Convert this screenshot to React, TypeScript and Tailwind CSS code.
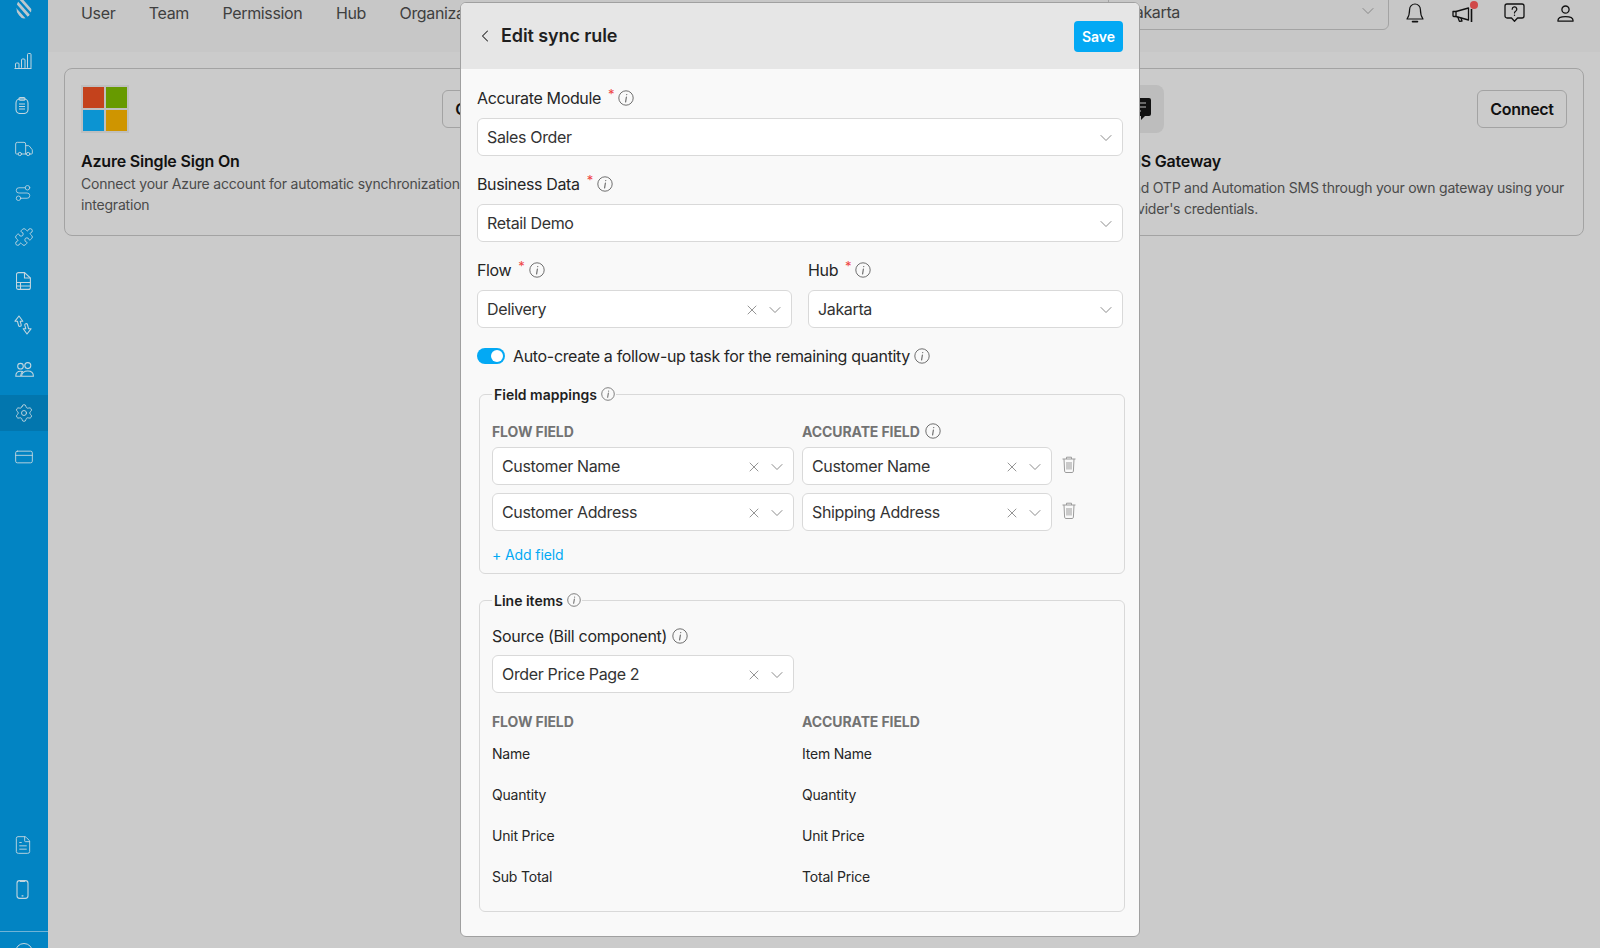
import { ChevronDown, ChevronLeft, CreditCard, FileText, Puzzle, Route, Settings, Truck, X } from "lucide-react";
import type { ReactNode } from "react";

const Info = ({ size = 16 }: { size?: number }) => (
  <svg width={size} height={size} viewBox="0 0 16 16" fill="none" stroke="#6f6f6f" strokeWidth="1" className="shrink-0">
    <circle cx="8" cy="8" r="7.2" />
    <path d="M8.4 7 7.6 11.8" strokeWidth="1.2" strokeLinecap="round" />
    <circle cx="8.7" cy="4.6" r="0.7" fill="#6f6f6f" stroke="none" />
  </svg>
);

const BarsIcon = () => (
  <svg width="18" height="18" viewBox="0 0 18 18" fill="none" stroke="currentColor" strokeWidth="1" className="-ml-[3px]">
    <path d="M.5 16.5h17" />
    <rect x="1.5" y="11" width="3.5" height="5.5" rx="1" />
    <rect x="7.5" y="7" width="3.5" height="9.5" rx="1" />
    <rect x="13.5" y="1.5" width="3.5" height="15" rx="1" />
  </svg>
);

const ClipIcon = () => (
  <svg width="14" height="17" viewBox="0 0 14 17" fill="none" stroke="currentColor" strokeWidth="1.1" className="-ml-[4px]">
    <rect x="1" y="2" width="12" height="14.5" rx="4" />
    <rect x="4" y="0.6" width="6" height="2.6" rx="1.2" />
    <path d="M4 7h6M4 9.5h6M4 12h6" />
  </svg>
);

const SheetIcon = () => (
  <svg width="15" height="18" viewBox="0 0 15 18" fill="none" stroke="currentColor" strokeWidth="1.1" className="-ml-[1px]">
    <path d="M2.5.6h6L14.4 6v9.4a2 2 0 0 1-2 2H2.5a2 2 0 0 1-2-2V2.6a2 2 0 0 1 2-2Z" />
    <path d="M8.5.6V6h5.9M.5 10.5h13.9M.5 14h13.9M4.5 10.5v7" />
  </svg>
);

const ArrowsIcon = () => (
  <svg width="18" height="20" viewBox="0 0 18 20" fill="none" stroke="currentColor" strokeWidth="1.1" strokeLinejoin="round" className="-ml-[2px]">
    <path d="M5 1 1 6.2h2.4l1.2 4.4c.5 1.4 3 .8 2.6-.8L6.2 6.2h2.6Z" />
    <path d="M13 19l4-5.2h-2.4l-1.2-4.4c-.5-1.4-3-.8-2.6.8l1 3.6H9.2Z" />
  </svg>
);

const UsersIcon = () => (
  <svg width="19" height="15" viewBox="0 0 19 15" fill="none" stroke="currentColor" strokeWidth="1.1">
    <circle cx="5.5" cy="4.2" r="2.8" />
    <circle cx="12.8" cy="3.6" r="3" />
    <path d="M.8 14.2c0-3.2 2-5 4.7-5 .8 0 1.4.1 2 .4-1.2 1-1.9 2.6-1.9 4.6Z" />
    <path d="M6.6 14.2c0-3.4 2.6-5.2 6.2-5.2s5.6 1.8 5.6 5.2Z" />
  </svg>
);

const PhoneIcon = () => (
  <svg width="13" height="19" viewBox="0 0 13 19" fill="none" stroke="currentColor" strokeWidth="1.1" className="-ml-[3px]">
    <rect x="1" y="0.6" width="11" height="17.8" rx="2.6" />
    <path d="M3.8 1.4h5.4M5.6 15.8h1.8" strokeWidth="1.3" />
  </svg>
);

const BellIcon = () => (
  <svg width="18" height="21" viewBox="0 0 18 21" fill="none" stroke="#111" strokeWidth="1.2" strokeLinejoin="round">
    <path d="M9 1a5.4 5.4 0 0 0-5.4 5.4c0 5-.8 7-2.6 9.6h16c-1.8-2.6-2.6-4.6-2.6-9.6A5.4 5.4 0 0 0 9 1Z" />
    <path d="M6.6 18.6h4.8" strokeWidth="1.8" strokeLinecap="round" />
  </svg>
);

const MegaphoneIcon = () => (
  <svg width="22" height="16" viewBox="0 0 22 16" fill="none" stroke="#111" strokeWidth="1.3" strokeLinejoin="round">
    <path d="M1 4.5h3v5H1.8A.8.8 0 0 1 1 8.7Z" />
    <path d="M4 4.5 16.5 1v12L4 9.5" />
    <path d="M5.8 10l1.6 4.4 2.6-.4-1-3" />
    <path d="M19.5 2v13" strokeWidth="1.6" />
  </svg>
);

const QuestionBubble = () => (
  <svg width="21" height="20" viewBox="0 0 21 20" fill="none" stroke="#111" strokeWidth="1.3" strokeLinejoin="round">
    <path d="M3 1h15a2 2 0 0 1 2 2v10a2 2 0 0 1-2 2h-4.5l-3 3.2-3-3.2H3a2 2 0 0 1-2-2V3a2 2 0 0 1 2-2Z" />
    <path d="M8.2 6.2a2.3 2.3 0 1 1 3.4 2c-.8.5-1.1.9-1.1 1.7" strokeLinecap="round" />
    <circle cx="10.5" cy="12.2" r="0.7" fill="#111" stroke="none" />
  </svg>
);

const PersonIcon = () => (
  <svg width="17" height="17" viewBox="0 0 17 17" fill="none" stroke="#111" strokeWidth="1.3" strokeLinejoin="round">
    <circle cx="8.5" cy="4.6" r="3.6" />
    <path d="M1 16.2v-1c0-2.2 3.2-3.6 7.5-3.6s7.5 1.4 7.5 3.6v1Z" />
  </svg>
);

const Trash = () => (
  <svg width="14" height="17" viewBox="0 0 14 17" fill="none" stroke="#9b9b9b" strokeWidth="1">
    <path d="M.5 3h13M4.5 3V1.2h5V3M2 3l.6 12.2c0 .7.5 1.3 1.2 1.3h6.4c.7 0 1.2-.6 1.2-1.3L12 3M5 6v7.5M7 6v7.5M9 6v7.5" />
  </svg>
);

const LogoMark = () => (
  <svg width="16" height="19" viewBox="0 0 16 19">
    <clipPath id="logo-clip">
      <ellipse cx="8" cy="8" rx="7.6" ry="10.4" />
    </clipPath>
    <g clipPath="url(#logo-clip)" stroke="#bcc8ce" strokeWidth="2.8">
      <path d="M-6 3 10 21M-3 -2 13 16M2 -4 18 14" />
    </g>
  </svg>
);

const Select = ({ value, clear, className = "" }: { value: string; clear?: boolean; className?: string }) => (
  <div className={`h-[38px] flex items-center pl-[9px] pr-[6px] bg-white border border-[#d9d9d9] rounded-[6px] text-[16px] tracking-[-0.35px] text-[#333333] ${className}`}>
    <span className="flex-1 truncate">{value}</span>
    {clear && <X size={16} strokeWidth={1.25} className="text-[#808080] mr-[5px] mt-[2px]" />}
    <ChevronDown size={20} strokeWidth={1.1} className="text-[#808080] mt-[2px]" />
  </div>
);

const Label = ({ text, required }: { text: string; required?: boolean }) => (
  <div className="h-[24px] mb-[8px] flex items-center text-[16px] tracking-[-0.35px] text-[#262626]">
    {text}
    {required && <span className="ml-[7px] mr-[4px] -mt-[8px] text-[13px] leading-none text-[#ef4444]">*</span>}
    <Info />
  </div>
);

const ColHead = ({ children }: { children: ReactNode }) => (
  <div className="h-[20px] flex items-center gap-[5px] text-[14px] font-bold tracking-[-0.1px] text-[#737373]">{children}</div>
);

const Legend = ({ text }: { text: string }) => (
  <legend className="h-[20px] pl-[2px] pr-[1px] flex items-center gap-[4px] text-[14px] font-semibold text-[#1f1f1f]">
    {text}
    <Info size={14} />
  </legend>
);

const navItems = ["User", "Team", "Permission", "Hub", "Organization"];

const sideIcons = [
  <BarsIcon />,
  <ClipIcon />,
  <Truck size={20} strokeWidth={1.1} className="-ml-[1px]" />,
  <Route size={18} strokeWidth={1.1} className="-ml-[3px]" />,
  <Puzzle size={20} strokeWidth={1.1} className="-ml-[1px]" />,
  <SheetIcon />,
  <ArrowsIcon />,
  <UsersIcon />,
  <Settings size={20} strokeWidth={1.1} />,
  <CreditCard size={20} strokeWidth={1.1} />,
];

const mappings = [
  ["Customer Name", "Customer Name"],
  ["Customer Address", "Shipping Address"],
];

const lineItems = [
  ["Name", "Item Name"],
  ["Quantity", "Quantity"],
  ["Unit Price", "Unit Price"],
  ["Sub Total", "Total Price"],
];

export default function App() {
  return (
    <div className="relative flex h-[948px] overflow-hidden bg-[#cbcbcb] font-['Inter',sans-serif]">
      <aside className="w-[48px] shrink-0 flex flex-col bg-[#0284c3] text-[#c3d6df]">
        <div className="h-[43px] flex justify-center"><LogoMark /></div>
        <div className="flex flex-col gap-[8px]">
          {sideIcons.map((icon, i) => (
            <div key={i} className={`h-[36px] flex items-center justify-center ${i === 8 ? "bg-[#0276ae]" : ""}`}>
              {icon}
            </div>
          ))}
        </div>
        <div className="mt-auto flex flex-col gap-[8px]">
          <div className="h-[36px] flex items-center justify-center"><FileText size={20} strokeWidth={1.1} className="-ml-[3px]" /></div>
          <div className="h-[36px] flex items-center justify-center"><PhoneIcon /></div>
          <div className="mt-[16px] h-[17px] border-t border-[#6fb3d6] flex justify-center pt-[11px]">
            <div className="w-[18px] h-[18px] shrink-0 rounded-full border border-[#c3d6df]" />
          </div>
        </div>
      </aside>

      <main className="flex-1 min-w-0">
        <header className="h-[52px] bg-[#c7c7c7] flex items-start pl-[33px] pr-[23px]">
          <nav className="flex gap-[33.5px] h-[26px] items-center text-[16px] tracking-[-0.35px] text-[#3f3f3f] whitespace-nowrap">
            {navItems.map((n) => <span key={n}>{n}</span>)}
          </nav>
          <div className="ml-auto flex items-start">
            <div className="w-[281px] h-[38px] -mt-[8px] pl-[9px] pr-[10px] flex items-center border border-[#a3a3a3] rounded-[6px] text-[16px] tracking-[-0.35px] text-[#3f3f3f]">
              <span className="flex-1 mt-[2px] pl-[8px]">Jakarta</span>
              <ChevronDown size={20} strokeWidth={1.1} className="text-[#808080]" />
            </div>
            <div className="ml-[14px] flex items-center h-[26px]">
              <div className="w-[24px] flex justify-center"><BellIcon /></div>
              <div className="relative w-[24px] ml-[24px] flex justify-center">
                <div className="pt-[3px]"><MegaphoneIcon /></div>
                <span className="absolute -top-[3px] right-[-3px] w-[8px] h-[8px] rounded-full bg-[#d04a4a]" />
              </div>
              <div className="w-[24px] ml-[27px] flex justify-center"><QuestionBubble /></div>
              <div className="w-[24px] ml-[27px] flex justify-center"><PersonIcon /></div>
            </div>
          </div>
        </header>

        <div className="flex justify-between px-[16px] pt-[16px]">
          <section className="w-[485px] h-[168px] border border-[#a3a3a3] rounded-[8px] pt-[16px] px-[16px]">
            <div className="flex justify-between items-start">
              <div className="w-[48px] h-[48px] bg-[#bfbfbf] grid grid-cols-2 gap-[2px] p-[2px]">
                <div className="bg-[#c4421c]" />
                <div className="bg-[#679a00]" />
                <div className="bg-[#0c94d2]" />
                <div className="bg-[#cf9500]" />
              </div>
              <button className="w-[90px] h-[38px] mt-[5px] border border-[#a3a3a3] rounded-[6px] text-[16px] tracking-[-0.3px] font-semibold text-[#111]">Connect</button>
            </div>
            <h3 className="mt-[16px] text-[16px] tracking-[-0.2px] leading-[24px] font-semibold text-[#111]">Azure Single Sign On</h3>
            <p className="text-[14px] tracking-[-0.2px] leading-[21px] text-[#4a4a4a]">Connect your Azure account for automatic synchronization and user integration</p>
          </section>

          <section className="w-[485px] h-[168px] border border-[#a3a3a3] rounded-[8px] pt-[16px] px-[16px]">
            <div className="flex justify-between items-start">
              <div className="w-[48px] h-[48px] bg-[#bdbdbd] rounded-[8px] flex items-center justify-center">
                <svg width="24" height="24" viewBox="0 0 24 24">
                  <path d="M3 1h18a2 2 0 0 1 2 2v14a2 2 0 0 1-2 2h-4l-4 4v-4H3a2 2 0 0 1-2-2V3a2 2 0 0 1 2-2Z" fill="#111" />
                  <path d="M6 6h12M6 10h12M6 14h7" stroke="#bdbdbd" strokeWidth="1.2" />
                </svg>
              </div>
              <button className="w-[90px] h-[38px] mt-[5px] border border-[#a3a3a3] rounded-[6px] text-[16px] tracking-[-0.3px] font-semibold text-[#111]">Connect</button>
            </div>
            <h3 className="mt-[16px] text-[16px] tracking-[-0.2px] leading-[24px] font-semibold text-[#111]">SMS Gateway</h3>
            <p className="mt-[4px] text-[14px] tracking-[-0.23px] leading-[21px] text-[#4a4a4a]">Send OTP and Automation SMS through your own gateway using your provider's credentials.</p>
          </section>
        </div>
      </main>

      {/* dialog */}
      <div className="absolute left-[460px] top-[2px] w-[680px] h-[935px] bg-[#f9f9f9] border border-[#a0a0a0] rounded-[6px] overflow-hidden">
        <div className="h-[66px] bg-[#e6e6e6] flex items-center pl-[15px] pr-[16px]">
          <ChevronLeft size={20} strokeWidth={1.25} className="text-[#222] -ml-[1px]" />
          <h2 className="ml-[6px] -mt-[1px] text-[18px] tracking-[-0.1px] font-semibold text-[#1f1f1f]">Edit sync rule</h2>
          <button className="ml-auto w-[49px] h-[31px] rounded-[4px] bg-[#03a9f4] text-[14px] font-semibold text-white">Save</button>
        </div>

        <div className="px-[16px] pt-[17px]">
          <Label text="Accurate Module" required />
          <Select value="Sales Order" />
          <div className="mt-[16px]">
            <Label text="Business Data" required />
            <Select value="Retail Demo" />
          </div>
          <div className="mt-[16px] grid grid-cols-2 gap-[16px]">
            <div>
              <Label text="Flow" required />
              <Select value="Delivery" clear />
            </div>
            <div>
              <Label text="Hub" required />
              <Select value="Jakarta" />
            </div>
          </div>

          <div className="mt-[18px] h-[20px] flex items-center text-[16px] tracking-[-0.33px] text-[#262626]">
            <div className="w-[28px] h-[16px] rounded-full bg-[#03a9f4] flex justify-end items-center pr-[2px]">
              <div className="w-[12px] h-[12px] rounded-full bg-white" />
            </div>
            <span className="ml-[8px] mr-[4px]">Auto-create a follow-up task for the remaining quantity</span>
            <Info />
          </div>

          <fieldset className="mt-[18px] ml-[2px] w-[646px] border border-[#d9d9d9] rounded-[6px] px-[12px] pb-[9px]">
            <Legend text="Field mappings" />
            <div className="pt-[17px] grid grid-cols-[302px_250px_auto] gap-x-[8px] gap-y-[8px] items-center">
              <div className="col-span-1 -mb-[2px]"><ColHead>FLOW FIELD</ColHead></div>
              <div className="col-span-2 -mb-[2px]"><ColHead>ACCURATE FIELD <Info /></ColHead></div>
              {mappings.map(([a, b], i) => (
                <div key={i} className="contents">
                  <Select value={a} clear />
                  <Select value={b} clear />
                  <div className="pl-[2px] -mt-[3px]"><Trash /></div>
                </div>
              ))}
            </div>
            <div className="mt-[13px] h-[20px] flex items-center text-[14px] tracking-[-0.1px] text-[#03a9f4]">+ Add field</div>
          </fieldset>

          <fieldset className="mt-[16px] ml-[2px] w-[646px] border border-[#d9d9d9] rounded-[6px] px-[12px] pb-[14px]">
            <Legend text="Line items" />
            <div className="mt-[14px] h-[24px] mb-[7px] flex items-center gap-[5px] text-[16px] tracking-[-0.3px] text-[#262626]">
              Source (Bill component) <Info />
            </div>
            <Select value="Order Price Page 2" clear className="w-[302px]" />
            <div className="mt-[18px] grid grid-cols-[302px_1fr] gap-x-[8px]">
              <ColHead>FLOW FIELD</ColHead>
              <ColHead>ACCURATE FIELD</ColHead>
            </div>
            <div className="mt-[2px] grid grid-cols-[302px_1fr] gap-x-[8px] text-[14px] tracking-[-0.2px] text-[#262626]">
              {lineItems.map(([a, b]) => (
                <div key={a} className="contents">
                  <div className="h-[41px] flex items-center">{a}</div>
                  <div className="h-[41px] flex items-center">{b}</div>
                </div>
              ))}
            </div>
          </fieldset>
        </div>
      </div>
    </div>
  );
}
